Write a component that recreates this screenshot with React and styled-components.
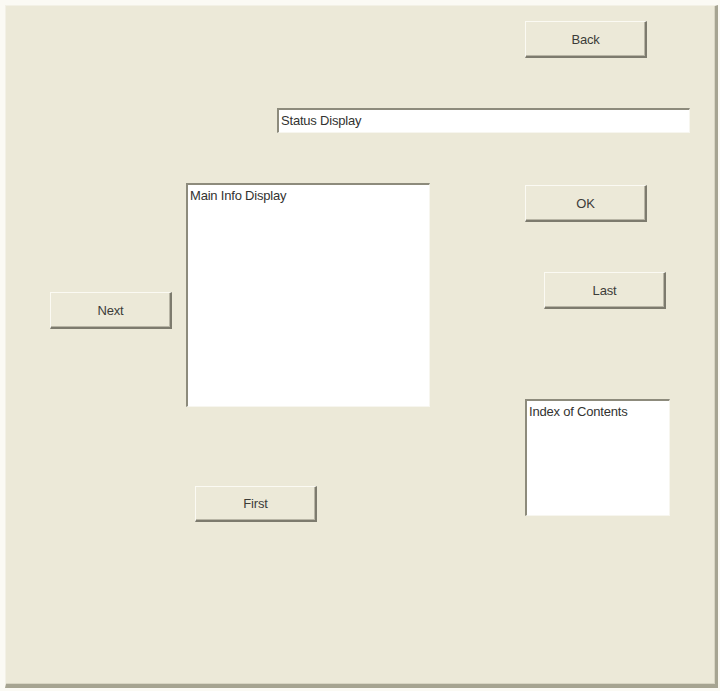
import React from "react";
import styled, { createGlobalStyle } from "styled-components";

const Global = createGlobalStyle`
  html, body { margin: 0; padding: 0; background: #f6f4ec; }
  body { width: 720px; height: 691px; overflow: hidden; font-family: "Liberation Sans", Arial, sans-serif; }
`;

const Frame = styled.div`
  box-sizing: border-box;
  width: 720px;
  height: 691px;
  padding: 5px 0 0 5px;
  background: #fbfaf4;
`;

const Form = styled.div`
  position: relative;
  box-sizing: border-box;
  width: 713px;
  height: 683px;
  background: #ece9d8;
  border-top: 1px solid #f3f1e6;
  border-left: 1px solid #f3f1e6;
  border-right: 3px solid #a6a491;
  border-bottom: 4px solid #a6a491;
  box-shadow: inset -1px -1px 0 #d8d5c3;
`;

const Placed = styled.div`
  position: absolute;
  box-sizing: border-box;
  left: ${(p) => p.$x}px;
  top: ${(p) => p.$y}px;
  width: ${(p) => p.$w}px;
  height: ${(p) => p.$h}px;
`;

const Button = styled(Placed).attrs({ as: "button" })`
  margin: 0;
  padding: 0;
  display: flex;
  align-items: center;
  justify-content: center;
  background: #ece9d8;
  border-top: 1px solid #fbfaf3;
  border-left: 1px solid #fbfaf3;
  border-right: 2px solid #7d7b6e;
  border-bottom: 2px solid #7d7b6e;
  box-shadow: inset -1px -1px 0 #b8b5a5;
  font-family: "Liberation Sans", Arial, sans-serif;
  font-size: 13px;
  letter-spacing: -0.2px;
  color: #3c3c38;
  cursor: default;
`;

const TextBox = styled(Placed)`
  background: #ffffff;
  border-top: 2px solid #8d8b7c;
  border-left: 2px solid #8d8b7c;
  border-right: 1px solid #f7f6ef;
  border-bottom: 1px solid #f7f6ef;
  padding: 3px 2px;
  font-family: "Liberation Sans", Arial, sans-serif;
  font-size: 13px;
  letter-spacing: -0.2px;
  line-height: 15px;
  color: #333331;
`;

const buttons = [
  { label: "Back", x: 519, y: 15, w: 122, h: 37 },
  { label: "OK", x: 519, y: 179, w: 122, h: 37 },
  { label: "Last", x: 538, y: 266, w: 122, h: 37 },
  { label: "Next", x: 44, y: 286, w: 122, h: 37 },
  { label: "First", x: 189, y: 480, w: 122, h: 36 },
];

const boxes = [
  { label: "Status Display", x: 271, y: 102, w: 413, h: 25 },
  { label: "Main Info Display", x: 180, y: 177, w: 244, h: 224 },
  { label: "Index of Contents", x: 519, y: 393, w: 145, h: 117 },
];

export default function App() {
  return (
    <>
      <Global />
      <Frame>
        <Form>
          {boxes.map((b) => (
            <TextBox key={b.label} $x={b.x} $y={b.y} $w={b.w} $h={b.h}>
              {b.label}
            </TextBox>
          ))}
          {buttons.map((b) => (
            <Button key={b.label} $x={b.x} $y={b.y} $w={b.w} $h={b.h}>
              {b.label}
            </Button>
          ))}
        </Form>
      </Frame>
    </>
  );
}
